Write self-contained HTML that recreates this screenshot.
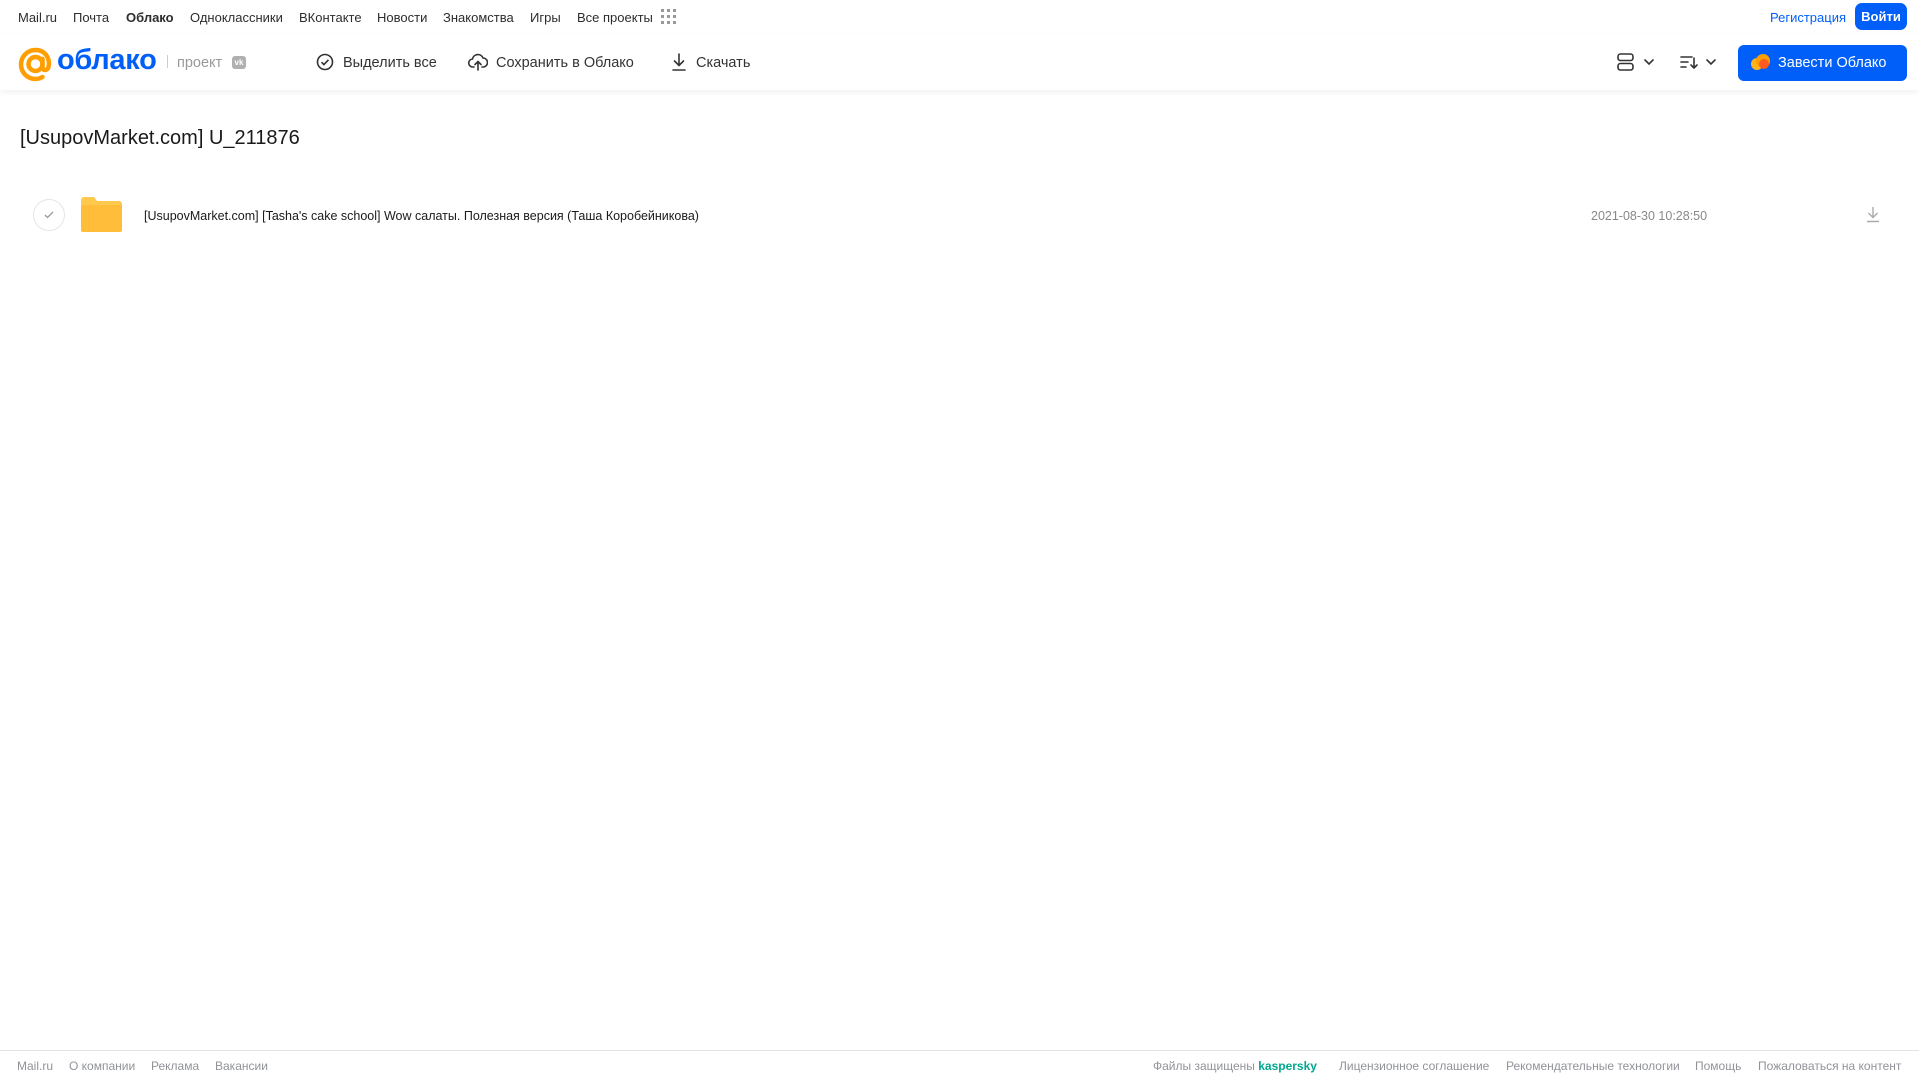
<!DOCTYPE html>
<html><head><meta charset="utf-8"><style>
*{margin:0;padding:0;box-sizing:border-box}
body{width:1919px;height:1079px;position:relative;background:#fff;font-family:"Liberation Sans",Arial,sans-serif;color:#2c2d2e;overflow:hidden}
.a{position:absolute;white-space:nowrap}
.nav{font-size:13px;top:10px;color:#2c2d2e}
.tb{font-size:14.5px;top:55px;color:#333}
.ft{font-size:12px;top:1059px;color:#919399}
</style></head><body>
<div class="a nav" style="left:18px">Mail.ru</div>
<div class="a nav" style="left:73px">Почта</div>
<div class="a nav" style="left:126px;font-weight:bold">Облако</div>
<div class="a nav" style="left:190px">Одноклассники</div>
<div class="a nav" style="left:299px">ВКонтакте</div>
<div class="a nav" style="left:377px">Новости</div>
<div class="a nav" style="left:443px">Знакомства</div>
<div class="a nav" style="left:530px">Игры</div>
<div class="a nav" style="left:577px">Все проекты</div>
<svg class="a" style="left:661px;top:9px" width="15" height="15" viewBox="0 0 15 15" fill="#999"><g><rect x="0" y="0" width="3" height="3"/><rect x="6" y="0" width="3" height="3"/><rect x="12" y="0" width="3" height="3"/><rect x="0" y="6" width="3" height="3"/><rect x="6" y="6" width="3" height="3"/><rect x="12" y="6" width="3" height="3"/><rect x="0" y="12" width="3" height="3"/><rect x="6" y="12" width="3" height="3"/><rect x="12" y="12" width="3" height="3"/></g></svg>
<div class="a" style="left:1770px;top:10px;font-size:13px;color:#005ff9">Регистрация</div>
<div class="a" style="left:1855px;top:3px;width:52px;height:27px;background:#005ff9;border-radius:7px;color:#fff;font-size:13px;font-weight:bold;text-align:center;line-height:27px">Войти</div>

<div class="a" style="left:0;top:34px;width:1919px;height:56px;box-shadow:0 2px 6px rgba(0,0,0,.06)"></div>
<svg class="a" style="left:18px;top:47px" width="35" height="35" viewBox="0 0 35 35"><circle cx="17.5" cy="17" r="7" fill="none" stroke="#ff9e00" stroke-width="4.5"/><path d="M24.5 12v8c0 4 5 4 6 0 2-8-3-17-13-17C9.5 3 3 9.5 3 17.5S9.5 32 17.5 32c3 0 5-.8 7-2" fill="none" stroke="#ff9e00" stroke-width="4.5" stroke-linecap="round"/></svg>
<div class="a" style="left:57px;top:44px;font-size:29px;font-weight:bold;color:#005ff9;letter-spacing:-.3px">облако</div>
<div class="a" style="left:167px;top:55px;width:1px;height:13px;background:#ccc"></div>
<div class="a" style="left:177px;top:55px;font-size:14.5px;color:#999">проект</div>
<div class="a" style="left:232px;top:56px;width:14px;height:13px;background:#b0b0b0;border-radius:3px;color:#fff;font-size:8px;font-weight:bold;text-align:center;line-height:13px">vk</div>

<svg class="a" style="left:316px;top:53px" width="18" height="18" viewBox="0 0 18 18" fill="none" stroke="#333" stroke-width="1.6"><circle cx="9" cy="9" r="7.5"/><path d="M5.5 9.2l2.4 2.4 4.6-4.8"/></svg>
<div class="a tb" style="left:343px">Выделить все</div>
<svg class="a" style="left:468px;top:53px" width="20" height="18" viewBox="0 0 20 18" fill="none" stroke="#333" stroke-width="1.6" stroke-linecap="round"><path d="M6 14H5a4 4 0 0 1-.5-8A5.5 5.5 0 0 1 15 5a4.5 4.5 0 0 1 0 9h-1"/><path d="M10 17V9M7 11.5L10 8.5l3 3"/></svg>
<div class="a tb" style="left:496px">Сохранить в Облако</div>
<svg class="a" style="left:671px;top:53px" width="16" height="18" viewBox="0 0 16 18" fill="none" stroke="#333" stroke-width="1.6" stroke-linecap="round"><path d="M8 1v11M3.5 8L8 12.5 12.5 8M2 17h12"/></svg>
<div class="a tb" style="left:696px">Скачать</div>

<svg class="a" style="left:1617px;top:53px" width="44" height="18" viewBox="0 0 44 18" fill="none" stroke="#333" stroke-width="1.6" stroke-linecap="round"><rect x="1" y="1" width="15" height="6.5" rx="2.5"/><rect x="1" y="10.5" width="15" height="6.5" rx="2.5"/><path d="M28 7l4 4 4-4"/></svg>
<svg class="a" style="left:1680px;top:53px" width="40" height="18" viewBox="0 0 40 18" fill="none" stroke="#333" stroke-width="1.6" stroke-linecap="round"><path d="M1 4h11M1 9h7M1 14h5M14 5v10M11 12l3 3 3-3M27 7l4 4 4-4"/></svg>
<div class="a" style="left:1738px;top:45px;width:169px;height:36px;background:#005ff9;border-radius:6px"></div>
<svg class="a" style="left:1750px;top:53px" width="22" height="18" viewBox="0 0 22 18"><circle cx="7" cy="11" r="6" fill="#ffb31a"/><circle cx="13" cy="8" r="7" fill="#ff9e00"/><circle cx="14" cy="11" r="5" fill="#ff5a1f"/></svg>
<div class="a" style="left:1778px;top:55px;font-size:14.5px;color:#fff">Завести Облако</div>

<div class="a" style="left:20px;top:127px;font-size:20px;color:#1a1a1a">[UsupovMarket.com] U_211876</div>

<div class="a" style="left:33px;top:199px;width:32px;height:32px;border:1px solid #e5e5e5;border-radius:50%"></div>
<svg class="a" style="left:43px;top:210px" width="12" height="10" viewBox="0 0 12 10" fill="none" stroke="#999" stroke-width="1.3"><path d="M2 5l2.5 2.5L10 2"/></svg>
<svg class="a" style="left:81px;top:197px" width="41" height="35" viewBox="0 0 41 35"><path d="M0 3a3 3 0 0 1 3-3h10l3 4h22a3 3 0 0 1 3 3v25a3 3 0 0 1-3 3H3a3 3 0 0 1-3-3z" fill="#ffc94d"/><rect x="0" y="8" width="41" height="27" rx="2" fill="#ffbd3a"/></svg>
<div class="a" style="left:144px;top:209px;font-size:12.5px;color:#1a1a1a">[UsupovMarket.com] [Tasha's cake school] Wow салаты. Полезная версия (Таша Коробейникова)</div>
<div class="a" style="left:1591px;top:209px;font-size:12.5px;color:#888">2021-08-30 10:28:50</div>
<svg class="a" style="left:1866px;top:206px" width="14" height="17" viewBox="0 0 14 17" fill="none" stroke="#aaa" stroke-width="1.4"><path d="M7 1v10M2.5 7L7 11.5 11.5 7M1 15.5h12"/></svg>

<div class="a" style="left:0;top:1050px;width:1919px;height:1px;background:#e3e3e3"></div>
<div class="a ft" style="left:17px">Mail.ru</div>
<div class="a ft" style="left:69px">О компании</div>
<div class="a ft" style="left:151px">Реклама</div>
<div class="a ft" style="left:215px">Вакансии</div>
<div class="a ft" style="left:1153px">Файлы защищены <b style="color:#00a88e">kaspersky</b></div>
<div class="a ft" style="left:1339px">Лицензионное соглашение</div>
<div class="a ft" style="left:1506px">Рекомендательные технологии</div>
<div class="a ft" style="left:1695px">Помощь</div>
<div class="a ft" style="left:1758px">Пожаловаться на контент</div>
</body></html>
